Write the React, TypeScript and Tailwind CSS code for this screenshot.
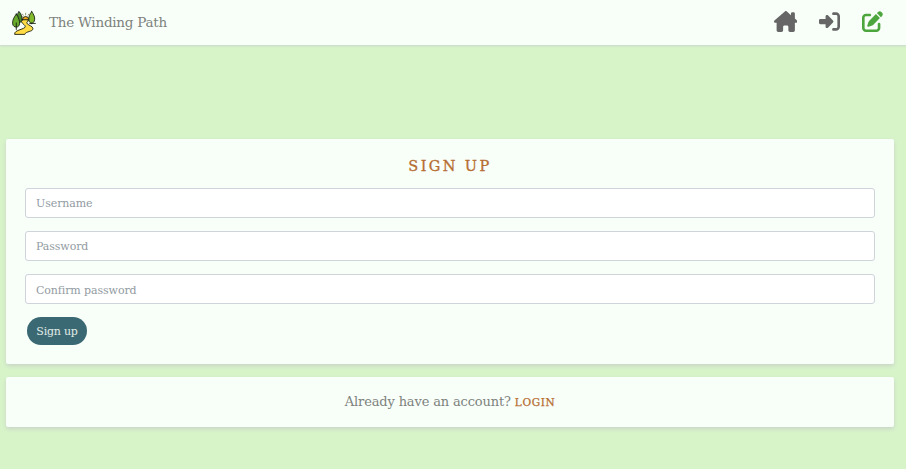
import { FaHouseChimney, FaPenToSquare, FaRightToBracket } from "react-icons/fa6";

function Logo() {
  return (
    <svg viewBox="0 0 32 32" className="h-[26px] w-[26px]" stroke="#161d10" strokeWidth="1.1" strokeLinejoin="round" strokeLinecap="round">
      <path d="M14 5l1 1.500M18 4v2M22 5l-1 1.500M13 8.500h1.500" stroke="#8a8a62" fill="none" />
      <path d="M14 12a4 4 0 0 1 8 0z" fill="#f0a51c" />
      <path d="M14.500 12h6.500c1 2-3 3-1 5 2 2 7 3 7 6 0 4-9 3-10 7H4.500c-1-6 14-6 13-10-1-3-8-5-3-8z" fill="#ffdc45" />
      <path d="M10 2c3 3 4 7 3 11-1 2-2 3-4 2L8 6z" fill="#4b8b28" />
      <path d="M6.500 5c3 4 4.500 9 4 12-.5 3-2 4-4 4s-4-1-4.500-4c-.5-4 1.500-8 4.500-12z" fill="#69a92c" />
      <path d="M6.500 16v8M25.500 13v4M23 16.500h7" fill="none" />
      <path d="M25.500 2c3 4 4 7 3.500 10-.3 3-2 4-3.500 4s-3.500-1-3.500-4c-.5-3 1-7 3.500-10z" fill="#83ba2d" />
    </svg>
  );
}

function Field({ label, type = "text", inset = "" }: { label: string; type?: string; inset?: string }) {
  return (
    <input
      type={type}
      placeholder={label}
      aria-label={label}
      className={`block h-[30px] w-full rounded-[3px] border border-[#ced4da] bg-white px-[10px] text-[11px] tracking-[-0.1px] text-[#495057] placeholder:text-[#929ba2] ${inset}`}
    />
  );
}

export default function App() {
  return (
    <div className="h-[469px] overflow-hidden bg-[#d7f4c9] font-['DejaVu_Serif',serif] text-[#7d827d]">
      <header className="flex h-[45px] items-center justify-between bg-[#f8fff9] pr-[23px] pl-[11px] shadow-[0_1px_2px_#cbd5cc]">
        <a className="flex items-center gap-3">
          <Logo />
          <span className="text-[13.5px] tracking-[-0.25px] whitespace-nowrap">The Winding Path</span>
        </a>
        <nav className="flex items-center gap-[21px] pb-[3px] text-[21px] text-[#666666]">
          <FaHouseChimney className="mr-px h-[21px] w-[23.5px]" />
          <FaRightToBracket className="mr-px" />
          <FaPenToSquare className="text-[#4da63d]" />
        </nav>
      </header>
      <main className="flex flex-col gap-[13px] pt-[94px] pr-3 pl-1.5">
        <section className="h-[225px] rounded-[2px] bg-[#f8fff9] px-[19px] pt-[17px] shadow-[0_2px_4px_#c9d5c8]">
          <h1 className="mb-3 text-center text-[14.5px] leading-5 tracking-[2.4px] text-[#b66d31] [-webkit-text-stroke:0.3px_#b66d31]">SIGN UP</h1>
          <form className="flex flex-col items-start gap-[13px]">
            <Field label="Username" />
            <Field label="Password" type="password" />
            <Field label="Confirm password" type="password" inset="pt-0.5" />
            <button type="button" className="ml-[2px] h-7 w-[60px] rounded-full bg-[#3b6973] pt-0.5 text-[11px] tracking-[-0.2px] whitespace-nowrap text-[#e0ece8]">Sign up</button>
          </form>
        </section>
        <section className="flex h-[50px] items-baseline justify-center gap-1 rounded-[2px] bg-[#f8fff9] pt-[15px] shadow-[0_2px_4px_#c9d5c8]">
          <span className="text-[13px] leading-5 tracking-[-0.15px]">Already have an account?</span>
          <a className="text-[10.5px] tracking-[0.6px] text-[#b66d31] [-webkit-text-stroke:0.25px_#b66d31]">LOGIN</a>
        </section>
      </main>
    </div>
  );
}
